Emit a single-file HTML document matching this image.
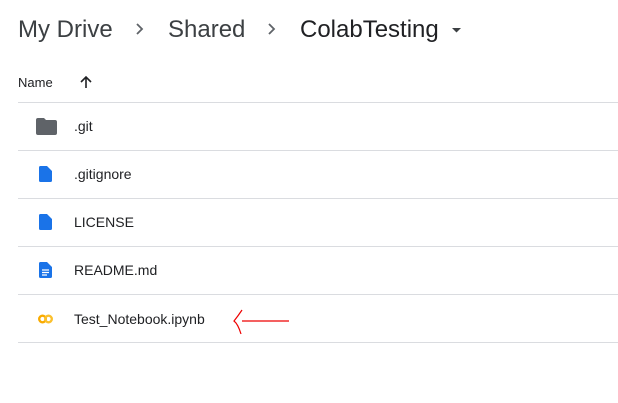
<!DOCTYPE html>
<html><head><style>
body{margin:0;width:618px;height:403px;background:#fff;font-family:"Liberation Sans",sans-serif;position:relative;overflow:hidden}
.a{position:absolute;white-space:nowrap}
.bc{font-size:24px;color:#3c4043;top:16px}
.line{position:absolute;left:18px;width:600px;height:1px;background:#dadce0}
.t{font-size:14px;color:#202124;left:74px}
</style></head><body>
<div class="a bc" style="left:18px">My Drive</div>
<svg class="a" style="left:134px;top:21px" width="12" height="16" viewBox="0 0 12 16"><path d="M3 3l5 5-5 5" fill="none" stroke="#5f6368" stroke-width="1.8"/></svg>
<div class="a bc" style="left:168px">Shared</div>
<svg class="a" style="left:266px;top:21px" width="12" height="16" viewBox="0 0 12 16"><path d="M3 3l5 5-5 5" fill="none" stroke="#5f6368" stroke-width="1.8"/></svg>
<div class="a bc" style="left:300px;color:#202124">ColabTesting</div>
<svg class="a" style="left:452px;top:28px" width="9" height="5"><path d="M0 0h9L4.5 4.5z" fill="#3c4043"/></svg>
<div class="a" style="left:18px;top:75px;font-size:13px;color:#202124">Name</div>
<svg class="a" style="left:79px;top:75px" width="14" height="14" viewBox="0 0 14 14"><path d="M7 13V2M2 7l5-5 5 5" fill="none" stroke="#202124" stroke-width="1.6"/></svg>
<div class="line" style="top:102px"></div>
<div class="line" style="top:150px"></div>
<div class="line" style="top:198px"></div>
<div class="line" style="top:246px"></div>
<div class="line" style="top:294px"></div>
<div class="line" style="top:342px"></div>
<svg class="a" style="left:36px;top:118px" width="21" height="17" viewBox="0 0 21 17"><path d="M2 0h6l2 2h9a2 2 0 0 1 2 2v11a2 2 0 0 1-2 2H2a2 2 0 0 1-2-2V2a2 2 0 0 1 2-2z" fill="#5f6368"/></svg>
<div class="a t" style="top:118px">.git</div>
<svg class="a" style="left:39px;top:166px" width="13" height="16" viewBox="0 0 13 16"><path d="M1.5 0H8l5 5v9.5a1.5 1.5 0 0 1-1.5 1.5h-10A1.5 1.5 0 0 1 0 14.5v-13A1.5 1.5 0 0 1 1.5 0z" fill="#1a73e8"/></svg>
<div class="a t" style="top:166px">.gitignore</div>
<svg class="a" style="left:39px;top:214px" width="13" height="16" viewBox="0 0 13 16"><path d="M1.5 0H8l5 5v9.5a1.5 1.5 0 0 1-1.5 1.5h-10A1.5 1.5 0 0 1 0 14.5v-13A1.5 1.5 0 0 1 1.5 0z" fill="#1a73e8"/></svg>
<div class="a t" style="top:214px">LICENSE</div>
<svg class="a" style="left:39px;top:262px" width="13" height="16" viewBox="0 0 13 16"><path d="M1.5 0H8l5 5v9.5a1.5 1.5 0 0 1-1.5 1.5h-10A1.5 1.5 0 0 1 0 14.5v-13A1.5 1.5 0 0 1 1.5 0z" fill="#1a73e8"/><path d="M3 8h7M3 10.5h7M3 13h5" stroke="#fff" stroke-width="1.2"/></svg>
<div class="a t" style="top:262px">README.md</div>
<svg class="a" style="left:37px;top:314px" width="18" height="10" viewBox="0 0 18 10"><circle cx="5.5" cy="5" r="3.3" fill="none" stroke="#f9ab00" stroke-width="2.4"/><circle cx="11.5" cy="5" r="3.3" fill="none" stroke="#fbc02d" stroke-width="2.4"/></svg>
<div class="a t" style="top:311px">Test_Notebook.ipynb</div>
<svg class="a" style="left:230px;top:308px" width="62" height="28" viewBox="0 0 62 28"><path d="M59 13H12M12 2Q8 8 4 13Q8 16 11 26" fill="none" stroke="#e00" stroke-width="1.2"/></svg>
</body></html>
